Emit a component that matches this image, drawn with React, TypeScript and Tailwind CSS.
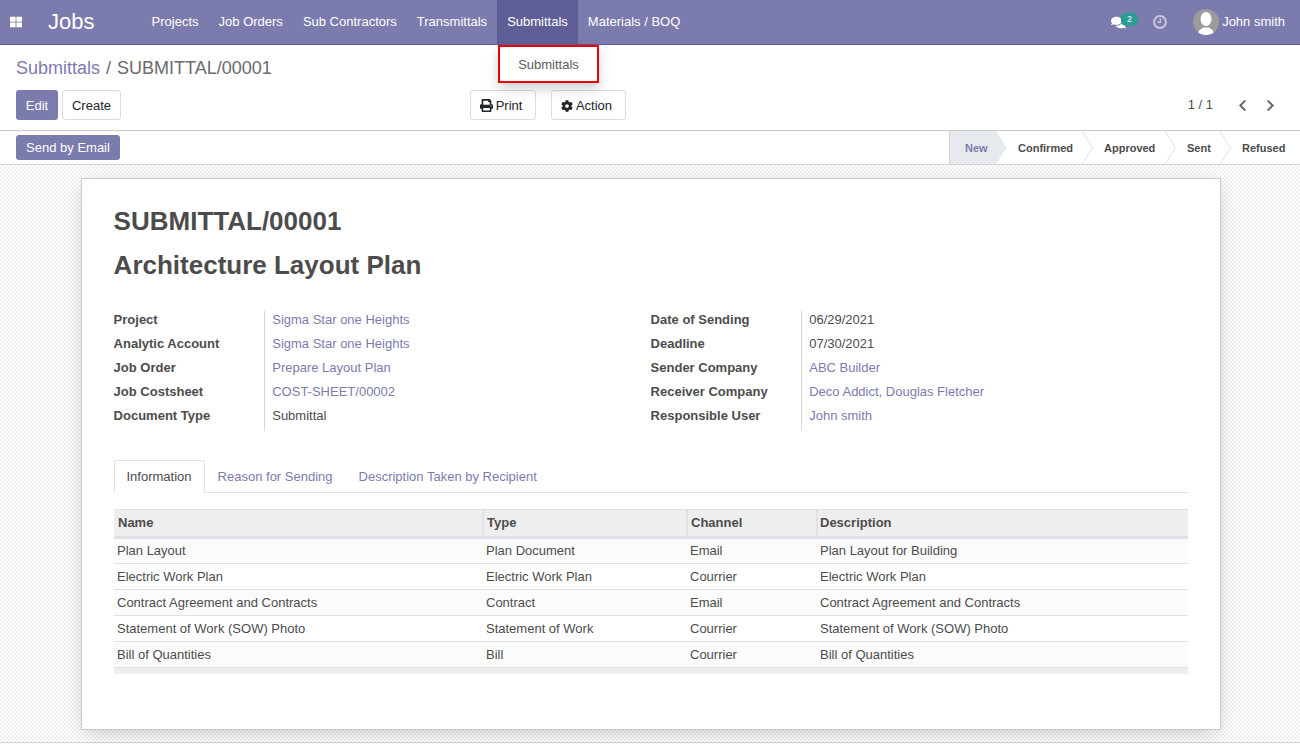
import { FaPrint, FaCog, FaChevronLeft, FaChevronRight, FaComments, FaThLarge } from 'react-icons/fa';

const navItems = ['Projects', 'Job Orders', 'Sub Contractors', 'Transmittals', 'Submittals', 'Materials / BOQ'];

const leftFields = [
  { label: 'Project', value: 'Sigma Star one Heights', link: true },
  { label: 'Analytic Account', value: 'Sigma Star one Heights', link: true },
  { label: 'Job Order', value: 'Prepare Layout Plan', link: true },
  { label: 'Job Costsheet', value: 'COST-SHEET/00002', link: true },
  { label: 'Document Type', value: 'Submittal', link: false },
];

const rightFields = [
  { label: 'Date of Sending', value: '06/29/2021', link: false },
  { label: 'Deadline', value: '07/30/2021', link: false },
  { label: 'Sender Company', value: 'ABC Builder', link: true },
  { label: 'Receiver Company', value: 'Deco Addict, Douglas Fletcher', link: true },
  { label: 'Responsible User', value: 'John smith', link: true },
];

const rows = [
  ['Plan Layout', 'Plan Document', 'Email', 'Plan Layout for Building'],
  ['Electric Work Plan', 'Electric Work Plan', 'Courrier', 'Electric Work Plan'],
  ['Contract Agreement and Contracts', 'Contract', 'Email', 'Contract Agreement and Contracts'],
  ['Statement of Work (SOW) Photo', 'Statement of Work', 'Courrier', 'Statement of Work (SOW) Photo'],
  ['Bill of Quantities', 'Bill', 'Courrier', 'Bill of Quantities'],
];

const stages = [
  { name: 'New', width: 'w-[47px] pl-[15px]', active: true },
  { name: 'Confirmed', width: 'w-[86px] pl-[22px]', active: false },
  { name: 'Approved', width: 'w-[83px] pl-[22px]', active: false },
  { name: 'Sent', width: 'w-[55px] pl-[22px]', active: false },
  { name: 'Refused', width: 'w-[80px] pl-[22px]', active: false },
];

function FieldGroup({ fields, labelWidth }: { fields: typeof leftFields; labelWidth: string }) {
  return (
    <div className="flex flex-col">
      {fields.map((f) => (
        <div key={f.label} className="flex h-6 items-center">
          <div className={`${labelWidth} -ml-[0.4px] pb-[6px] font-bold text-[#4c4c4c]`}>{f.label}</div>
          <div className={`flex h-6 items-center border-l border-[#d8d8d8] pb-[6px] pl-2 ${f.link ? 'text-[#7c7bad]' : 'text-[#4c4c4c]'}`}>
            <span className="-ml-[0.4px]">{f.value}</span>
          </div>
        </div>
      ))}
    </div>
  );
}

export default function App() {
  return (
    <div className="flex h-[744px] w-[1300px] flex-col overflow-hidden bg-white font-['Liberation_Sans',Arial,sans-serif] text-[13px] text-[#4c4c4c]">
      {/* top bar */}
      <header className="flex h-[45px] shrink-0 items-center border-b border-[#5f5e97] bg-[#7c7bad] text-white">
        <FaThLarge className="ml-[10px] h-[12px] w-[12px]" />
        <div className="ml-[26px] w-[93.6px] text-[22px] leading-none">Jobs</div>
        <nav className="flex h-full">
          {navItems.map((item) => (
            <div
              key={item}
              className={`flex h-[44px] items-center px-[10px] ${item === 'Submittals' ? 'bg-[#5f5e97]' : ''}`}
            >
              {item}
            </div>
          ))}
        </nav>
        <div className="ml-auto flex items-center">
          <div className="relative h-[20px] w-[30px]">
            <FaComments className="absolute left-[1px] top-[3px] h-[15px] w-[15px]" />
            <span className="absolute left-[11px] top-[1px] flex h-[13px] w-[17px] items-center justify-center rounded-[5px] bg-[#2a9d94] text-[9px] leading-none text-white">
              2
            </span>
          </div>
          <svg viewBox="0 0 14 14" className="ml-[13px] h-[14px] w-[14px]" fill="none" stroke="#c8c8dc" strokeWidth="2">
            <circle cx="7" cy="7" r="5.900" />
            <path d="M7.300 3.500V7.300H4.200" strokeWidth="1.500" />
          </svg>
          <div className="relative ml-[26px] h-[26px] w-[26px] overflow-hidden rounded-full bg-[#9b9b9b]">
            <svg viewBox="0 0 26 26" className="h-full w-full" fill="#fff">
              <ellipse cx="13" cy="10" rx="5.500" ry="7" />
              <path d="M5 26c0-4 1.500-5.500 5.500-7.500h5c4 2 5.500 3.500 5.500 7.500z" />
            </svg>
          </div>
          <div className="ml-[3px] mr-[15px]">John smith</div>
        </div>
      </header>

      {/* breadcrumb and buttons */}
      <section className="relative h-[86px] shrink-0 border-b border-[#c9c9c9] px-4">
        <div className="flex h-[45px] items-center pt-[1px] text-[18px] leading-none">
          <span className="text-[#7c7bad]">Submittals</span>
          <span className="ml-[6px] text-[#6b6b6b]">/</span>
          <span className="ml-[6px] text-[#6b6b6b]">SUBMITTAL/00001</span>
        </div>
        <div className="flex items-center">
          <button className="h-[30px] w-[42px] rounded-[3px] bg-[#7c7bad] pt-[1px] text-white">Edit</button>
          <button className="ml-1 h-[30px] w-[59px] rounded-[3px] border border-[#dcdcdc] pt-[1px] text-[#212529]">Create</button>
          <button className="ml-[349px] flex h-[30px] w-[66px] items-center justify-center gap-[3px] rounded-[3px] border border-[#dcdcdc] pr-[4px] pt-[1px] text-[#212529]">
            <FaPrint className="h-[13px] w-[13px]" />
            Print
          </button>
          <button className="ml-[15px] flex h-[30px] w-[75px] items-center justify-center gap-[3px] rounded-[3px] border border-[#dcdcdc] pr-[4px] pt-[1px] text-[#212529]">
            <FaCog className="h-[12px] w-[12px]" />
            Action
          </button>
          <div className="ml-auto flex items-center text-[#4c4c4c]">
            <span className="mr-[24px]">1 / 1</span>
            <FaChevronLeft className="h-[13px] w-[11px] text-[#5f6a75]" />
            <FaChevronRight className="ml-[17px] mr-[8px] h-[13px] w-[11px] text-[#5f6a75]" />
          </div>
        </div>
        {/* open menu */}
        <div className="absolute left-[498px] top-0 flex h-[38px] w-[101px] items-center justify-center border-2 border-[#ee0000] bg-white pt-[2px] text-[#5c5c5c] shadow-[0_6px_12px_rgba(0,0,0,0.175)]">
          Submittals
        </div>
      </section>

      {/* statusbar */}
      <section className="flex h-[34px] shrink-0 items-center justify-between border-b border-[#d4d4d4] pl-4">
        <button className="h-[25px] w-[104px] rounded-[3px] bg-[#7c7bad] pt-[1px] text-white">Send by Email</button>
        <div className="flex h-full">
          {stages.map((s, i) => (
            <div
              key={s.name}
              className={`relative flex h-full ${s.width} items-center pt-[1px] text-[11px] font-bold ${
                s.active ? 'border-l border-[#d4d4d4] bg-[#e6e9ed] text-[#7c7bad]' : 'text-[#4c4c4c]'
              }`}
            >
              {s.name}
              {i < stages.length - 1 && (
                <svg viewBox="0 0 11 33" preserveAspectRatio="none" className="absolute left-full top-0 z-10 h-full w-[11px]">
                  <path d="M0 0L10.500 16.500L0 33" fill={s.active ? '#e6e9ed' : '#fff'} stroke={s.active ? 'none' : '#dfe2e6'} />
                </svg>
              )}
            </div>
          ))}
        </div>
      </section>

      {/* form area */}
      <main className="mb-[1px] flex-1 border-b border-[#d4d4d4] bg-[repeating-conic-gradient(#f0f0f0_0_25%,#ffffff_0_50%)] bg-[length:4px_4px] pl-[81px] pt-[13px]">
        <div className="h-[552px] w-[1140px] border border-[#c8c8d0] bg-white px-8 pt-[26px] shadow-[0_5px_20px_-5px_rgba(0,0,0,0.25)]">
          <h1 className="-ml-[0.4px] text-[26px] font-bold leading-[32px] text-[#4c4c4c]">SUBMITTAL/00001</h1>
          <h2 className="-ml-[0.4px] mt-3 text-[26px] font-bold leading-[32px] text-[#4c4c4c]">Architecture Layout Plan</h2>

          <div className="mt-[30px] flex">
            <div className="w-[537px]">
              <FieldGroup fields={leftFields} labelWidth="w-[150px]" />
            </div>
            <FieldGroup fields={rightFields} labelWidth="w-[150px]" />
          </div>

          <div className="mt-[29px] flex h-[33px] border-b border-[#dee2e6]">
            <div className="flex h-[33px] w-[91px] items-center justify-center rounded-t-[3px] border border-b-0 border-[#dee2e6] bg-white pr-[1px] text-[#4c4c4c]">
              Information
            </div>
            <div className="-ml-[0.4px] flex items-center px-[13px] pt-[1px] text-[#7c7bad]">Reason for Sending</div>
            <div className="flex items-center px-[13px] pt-[1px] text-[#7c7bad]">Description Taken by Recipient</div>
          </div>

          <table className="mt-4 w-[1074px] table-fixed border-collapse">
            <thead>
              <tr className="h-[28px] border-t border-b-[3px] border-[#dee2e6] bg-[#eeeeee] text-left font-bold">
                <th className="w-[369px] pl-1 font-bold">Name</th>
                <th className="w-[204px] border-l-2 border-[#dee2e6] pl-[3px] font-bold">Type</th>
                <th className="w-[130px] border-l-2 border-[#dee2e6] pl-[3px] font-bold">Channel</th>
                <th className="border-l-2 border-[#dee2e6] pl-[2px] font-bold">Description</th>
              </tr>
            </thead>
            <tbody>
              {rows.map((r) => (
                <tr key={r[0]} className="h-[26px] border-b border-[#dee2e6] odd:bg-[#fbfbfb]">
                  <td className="pl-[3px]">{r[0]}</td>
                  <td className="pl-[3px]">{r[1]}</td>
                  <td className="pl-[3px]">{r[2]}</td>
                  <td className="pl-[3px]">{r[3]}</td>
                </tr>
              ))}
            </tbody>
          </table>
          <div className="h-[6px] w-[1074px] bg-[#eeeeee]" />
        </div>
      </main>
    </div>
  );
}
